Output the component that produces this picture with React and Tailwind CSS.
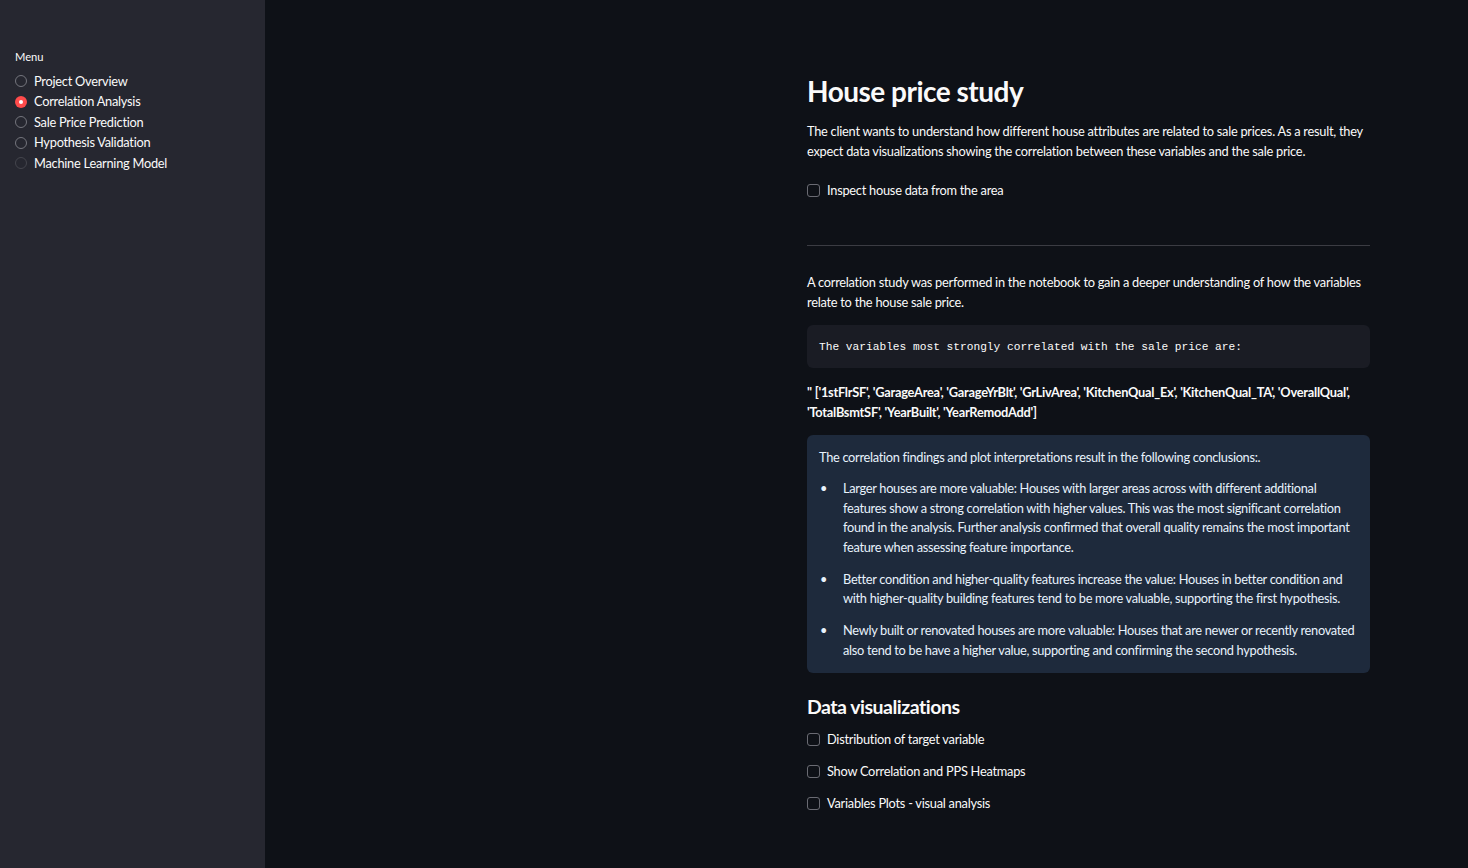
import React from "react";

const font = { fontFamily: "Lato, 'Open Sans', sans-serif" };

function Radio({ label, selected, faint }) {
  return (
    <div className="flex items-center h-[20.5px]">
      {selected ? (
        <span className="w-[12px] h-[12px] rounded-full bg-[#ff4b4b] flex items-center justify-center mr-[7px]">
          <span className="w-[4px] h-[4px] rounded-full bg-white" />
        </span>
      ) : (
        <span
          className={
            "w-[12px] h-[12px] rounded-full border-[1.5px] mr-[7px] " +
            (faint ? "border-[#44454d]" : "border-[#74757d]")
          }
        />
      )}
      <span className="text-[12.8px] text-[#fafafa] tracking-[-0.25px]">{label}</span>
    </div>
  );
}

function Check({ label }) {
  return (
    <div className="flex items-center h-[20px]">
      <span className="w-[13px] h-[13px] rounded-[3px] border border-[#6a6b73] mr-[7px]" />
      <span className="text-[12.8px] text-[#fafafa]">{label}</span>
    </div>
  );
}

export default function App() {
  return (
    <div className="flex w-full h-[868px] bg-[#0e1117] text-[#fafafa]" style={font}>
      <aside className="w-[265px] shrink-0 bg-[#262730] pl-[15px] pt-[49px]">
        <div className="text-[11.2px] text-[#fafafa] h-[16px] leading-[16px] mb-[6px]">Menu</div>
        <div className="flex flex-col">
          <Radio label="Project Overview" />
          <Radio label="Correlation Analysis" selected />
          <Radio label="Sale Price Prediction" />
          <Radio label="Hypothesis Validation" />
          <Radio label="Machine Learning Model" faint />
        </div>
      </aside>
      <main className="flex-1">
        <div className="ml-[542px] w-[563px] pt-[73px] text-[12.8px] leading-[20px] tracking-[-0.25px]">
          <h1 className="text-[28px] font-bold leading-[36px] tracking-[-0.5px]">House price study</h1>
          <p className="mt-[12px]">
            The client wants to understand how different house attributes are related to sale prices. As a result, they
            expect data visualizations showing the correlation between these variables and the sale price.
          </p>
          <div className="mt-[19px]">
            <Check label="Inspect house data from the area" />
          </div>
          <div className="mt-[45px] h-px bg-[#3b3c43]" />
          <p className="mt-[26px]">
            A correlation study was performed in the notebook to gain a deeper understanding of how the variables
            relate to the house sale price.
          </p>
          <div className="mt-[13px] h-[43px] rounded-[6px] bg-[#1a1c24] flex items-center pl-[12px]">
            <code
              className="text-[11.2px] text-[#fafafa] tracking-normal"
              style={{ fontFamily: "'Liberation Mono', 'DejaVu Sans Mono', monospace" }}
            >
              The variables most strongly correlated with the sale price are:
            </code>
          </div>
          <p className="mt-[14px] font-bold">
            " ['1stFlrSF', 'GarageArea', 'GarageYrBlt', 'GrLivArea', 'KitchenQual_Ex', 'KitchenQual_TA', 'OverallQual',
            'TotalBsmtSF', 'YearBuilt', 'YearRemodAdd']
          </p>
          <div className="mt-[13px] rounded-[6px] bg-[#1e2a3c] pl-[12px] pr-[9px] pt-[12px] pb-[13px] text-[#e8f2fc] tracking-[-0.3px]">
            <p>The correlation findings and plot interpretations result in the following conclusions:.</p>
            <ul className="mt-[12px] flex flex-col gap-[12.5px] leading-[19.5px]">
              <li className="flex">
                <span className="w-[24px] shrink-0 pl-[1px]">•</span>
                <span>
                  Larger houses are more valuable: Houses with larger areas across with different additional features
                  show a strong correlation with higher values. This was the most significant correlation found in the
                  analysis. Further analysis confirmed that overall quality remains the most important feature when
                  assessing feature importance.
                </span>
              </li>
              <li className="flex">
                <span className="w-[24px] shrink-0 pl-[1px]">•</span>
                <span>
                  Better condition and higher-quality features increase the value: Houses in better condition and with
                  higher-quality building features tend to be more valuable, supporting the first hypothesis.
                </span>
              </li>
              <li className="flex">
                <span className="w-[24px] shrink-0 pl-[1px]">•</span>
                <span>
                  Newly built or renovated houses are more valuable: Houses that are newer or recently renovated also
                  tend to be have a higher value, supporting and confirming the second hypothesis.
                </span>
              </li>
            </ul>
          </div>
          <h2 className="mt-[19px] text-[19.5px] font-bold leading-[30px] tracking-[-0.5px]">Data visualizations</h2>
          <div className="mt-[7px] flex flex-col gap-[12px]">
            <Check label="Distribution of target variable" />
            <Check label="Show Correlation and PPS Heatmaps" />
            <Check label="Variables Plots - visual analysis" />
          </div>
        </div>
      </main>
    </div>
  );
}
